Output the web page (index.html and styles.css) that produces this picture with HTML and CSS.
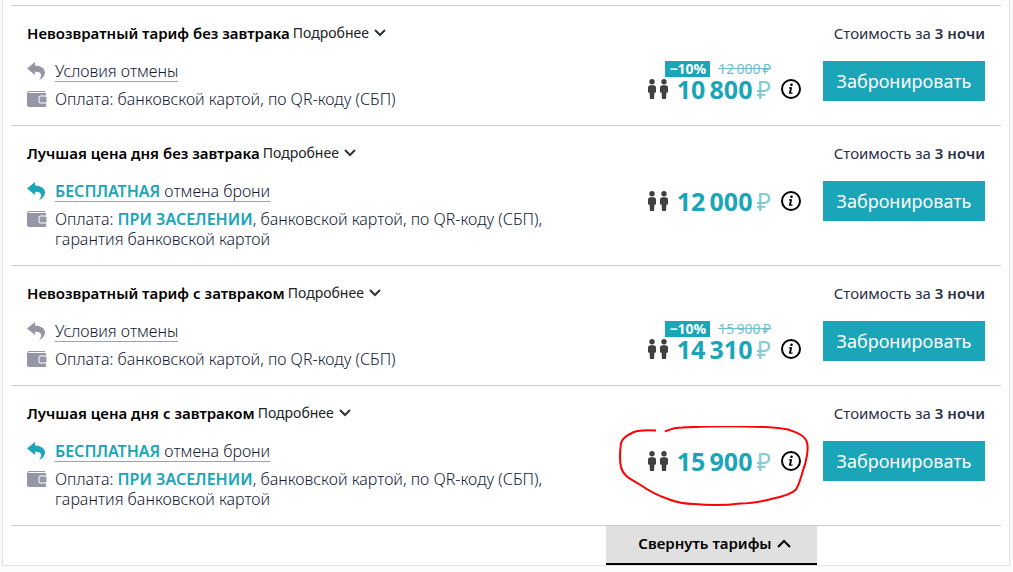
FILE: index.html
```
<!DOCTYPE html>
<html lang="ru">
<head>
    <meta charset="UTF-8">
    <meta name="viewport" content="width=device-width, initial-scale=1.0">
    <title>Тарифы</title>
    <link rel="stylesheet" href="styles.css">
</head>
<body>
    <!-- Shared icons -->
    <svg class="sprite" aria-hidden="true">
        <symbol id="icon-back" viewBox="0 0 20 18">
            <path d="M8 0 0 6.500l8 6.500V9.800c5-.3 8.500 2 4.200 8.200C21 14 20 4 8 3.600z"/>
        </symbol>
        <symbol id="icon-wallet" viewBox="0 0 20 18">
            <path d="M2 1h16v1H1.500v1H19v2.500h-5.500a2 2 0 0 0-2 2v4a2 2 0 0 0 2 2H19V17H2a2 2 0 0 1-2-2V3a2 2 0 0 1 2-2z"/>
            <rect x="12.500" y="6.500" width="7" height="6" rx="1"/>
        </symbol>
        <symbol id="icon-people" viewBox="0 0 20 20">
            <circle cx="4" cy="2.700" r="2.700"/>
            <path d="M2.500 6.200h3A2.500 2.500 0 0 1 8 8.700V13.500H6.500l-.5 6.500H2l-.5-6.500H0V8.700A2.500 2.500 0 0 1 2.500 6.200z"/>
            <circle cx="16" cy="2.700" r="2.700"/>
            <path d="M14.500 6.200h3A2.500 2.500 0 0 1 20 8.700v4.800h-1.500L18 20h-4l-.5-6.500H12V8.700a2.500 2.500 0 0 1 2.500-2.500z"/>
        </symbol>
        <symbol id="icon-info" viewBox="0 0 20 20">
            <circle cx="10" cy="10" r="9" fill="none" stroke="#000" stroke-width="2"/>
            <circle cx="10.500" cy="5.800" r="1.300"/>
            <path d="M8 8.200h3.200l-1.200 5.300h1.500v1.300H7.800L9 9.500H8z"/>
        </symbol>
        <symbol id="icon-down" viewBox="0 0 12 8">
            <path d="M1 1l5 5 5-5" fill="none" stroke="currentColor" stroke-width="2"/>
        </symbol>
        <symbol id="icon-up" viewBox="0 0 14 9">
            <path d="M1 8l6-6 6 6" fill="none" stroke="currentColor" stroke-width="2"/>
        </symbol>
    </svg>

    <div class="card">
        <div class="rates">
            <section class="rate">
                <div class="rate-header">
                    <h3>Невозвратный тариф без завтрака</h3>
                    <button class="more">Подробнее <svg><use href="#icon-down"/></svg></button>
                    <span class="nights">Стоимость за <b>3 ночи</b></span>
                </div>
                <div class="rate-body">
                    <ul class="terms">
                        <li><svg class="back"><use href="#icon-back"/></svg><a href="#">Условия отмены</a></li>
                        <li><svg class="wallet"><use href="#icon-wallet"/></svg><span>Оплата: банковской картой, по QR-коду (СБП)</span></li>
                    </ul>
                    <div class="price">
                        <div class="discount"><span class="badge">−10%</span><s>12&#8201;000&#8201;₽</s></div>
                        <div class="total">
                            <svg class="people"><use href="#icon-people"/></svg>
                            <strong>10&#8201;800<span>₽</span></strong>
                            <button class="info" aria-label="Информация о цене"><svg><use href="#icon-info"/></svg></button>
                        </div>
                    </div>
                    <button class="book">Забронировать</button>
                </div>
            </section>

            <section class="rate">
                <div class="rate-header">
                    <h3>Лучшая цена дня без завтрака</h3>
                    <button class="more">Подробнее <svg><use href="#icon-down"/></svg></button>
                    <span class="nights">Стоимость за <b>3 ночи</b></span>
                </div>
                <div class="rate-body">
                    <ul class="terms">
                        <li><svg class="back free"><use href="#icon-back"/></svg><a href="#"><b>БЕСПЛАТНАЯ</b> отмена брони</a></li>
                        <li><svg class="wallet"><use href="#icon-wallet"/></svg><span>Оплата: <b>ПРИ ЗАСЕЛЕНИИ</b>, банковской картой, по QR-коду (СБП),<br>гарантия банковской картой</span></li>
                    </ul>
                    <div class="price">
                        <div class="total">
                            <svg class="people"><use href="#icon-people"/></svg>
                            <strong>12&#8201;000<span>₽</span></strong>
                            <button class="info" aria-label="Информация о цене"><svg><use href="#icon-info"/></svg></button>
                        </div>
                    </div>
                    <button class="book">Забронировать</button>
                </div>
            </section>

            <section class="rate">
                <div class="rate-header">
                    <h3>Невозвратный тариф с затвраком</h3>
                    <button class="more">Подробнее <svg><use href="#icon-down"/></svg></button>
                    <span class="nights">Стоимость за <b>3 ночи</b></span>
                </div>
                <div class="rate-body">
                    <ul class="terms">
                        <li><svg class="back"><use href="#icon-back"/></svg><a href="#">Условия отмены</a></li>
                        <li><svg class="wallet"><use href="#icon-wallet"/></svg><span>Оплата: банковской картой, по QR-коду (СБП)</span></li>
                    </ul>
                    <div class="price">
                        <div class="discount"><span class="badge">−10%</span><s>15&#8201;900&#8201;₽</s></div>
                        <div class="total">
                            <svg class="people"><use href="#icon-people"/></svg>
                            <strong>14&#8201;310<span>₽</span></strong>
                            <button class="info" aria-label="Информация о цене"><svg><use href="#icon-info"/></svg></button>
                        </div>
                    </div>
                    <button class="book">Забронировать</button>
                </div>
            </section>

            <section class="rate">
                <div class="rate-header">
                    <h3>Лучшая цена дня с завтраком</h3>
                    <button class="more">Подробнее <svg><use href="#icon-down"/></svg></button>
                    <span class="nights">Стоимость за <b>3 ночи</b></span>
                </div>
                <div class="rate-body">
                    <ul class="terms">
                        <li><svg class="back free"><use href="#icon-back"/></svg><a href="#"><b>БЕСПЛАТНАЯ</b> отмена брони</a></li>
                        <li><svg class="wallet"><use href="#icon-wallet"/></svg><span>Оплата: <b>ПРИ ЗАСЕЛЕНИИ</b>, банковской картой, по QR-коду (СБП),<br>гарантия банковской картой</span></li>
                    </ul>
                    <div class="price">
                        <div class="total">
                            <svg class="people"><use href="#icon-people"/></svg>
                            <strong>15&#8201;900<span>₽</span></strong>
                            <button class="info" aria-label="Информация о цене"><svg><use href="#icon-info"/></svg></button>
                        </div>
                        <!-- Hand-drawn circle round the price -->
                        <svg class="marker" viewBox="619 426 192 84">
                            <path d="M656 430.500c-8-.5-17-.5-22 1.500-6 3-11 5-13 11-1 8-2 16 0 24 2 9 10 12 18 17 10 7 20 12 29 15 10 4 17 5 26 5 16 1.500 32 1.500 46-.5 14 0 22-2 33-5 10-2 18-4 23-9 5-8 6-18 9-25 2-8 4-14 2-22-2-7-10-10-19-13-16-3-27-3-42-3-24-1-44 0-64 1-8 0-12 2-17 4"/>
                        </svg>
                    </div>
                    <button class="book">Забронировать</button>
                </div>
            </section>
        </div>
        <button class="collapse">Свернуть тарифы <svg><use href="#icon-up"/></svg></button>
    </div>
</body>
</html>
```
FILE: styles.css
```
* {
    box-sizing: border-box;
}
body {
    font-family: "Noto Sans", "Open Sans", sans-serif;
    font-size: 16px;
    font-weight: 300;
    line-height: 20px;
    color: #151a35;
    background: #fcfcfc;
    margin: 0;
}
b {
    font-weight: 600;
}
button {
    font-family: inherit;
    border: 0;
    padding: 0;
    background: none;
    cursor: pointer;
}
svg {
    fill: currentColor;
    flex: none;
}
.sprite {
    display: none;
}
.card {
    margin: 0 3px 0 2px;
    padding: 5px 8px 0;
    background: #fff;
    border: 1px solid #e2e2e2;
    border-top: 0;
    box-shadow: 0 2px 4px rgba(0, 0, 0, 0.05);
}
.rates {
    border-top: 1px solid #ccc;
}
.rate {
    padding: 17px 16px 16px;
    border-bottom: 1px solid #ccc;
}
.rate-header {
    display: flex;
    align-items: center;
    margin-bottom: 18px;
}
.rate-header h3 {
    margin: 0 3px 0 0;
    font-size: 15px;
    font-weight: 600;
    color: #000;
}
.more {
    display: flex;
    align-items: center;
    gap: 5px;
    font-size: 14px;
    font-weight: 400;
    line-height: 20px;
    color: #222;
}
.more svg {
    width: 12px;
    height: 8px;
    color: #333;
}
.nights {
    margin-left: auto;
    font-size: 15px;
    font-weight: 400;
    color: #2b3048;
}
.rate-body {
    display: flex;
    align-items: flex-start;
}
.terms {
    flex: 1;
    list-style: none;
    margin: 0;
    padding: 0;
}
.terms li {
    display: flex;
    gap: 8px;
}
.terms li + li {
    margin-top: 7px;
}
.terms svg {
    width: 20px;
    height: 20px;
    padding: 1px 0;
    color: #9496a5;
}
.terms svg.free {
    color: #1ba5b8;
}
.terms a {
    color: inherit;
    text-decoration: none;
    border-bottom: 1px solid #a0a0ae;
    line-height: 20px;
}
.terms b {
    color: #1ba5b8;
}
.price {
    position: relative;
    display: flex;
    flex-direction: column;
    justify-content: center;
    height: 40px;
    margin-right: 22px;
}
.discount {
    display: flex;
    justify-content: flex-end;
    gap: 8px;
    margin-right: 30px;
    font-size: 14px;
    line-height: 16px;
}
.discount s {
    font-weight: 400;
    color: #6dbfcb;
}
.badge {
    padding: 0 4px;
    font-weight: bold;
    color: #fff;
    background: #1ba5b8;
}
.total {
    display: flex;
    align-items: center;
    justify-content: flex-end;
    height: 24px;
}
.people {
    width: 20px;
    height: 20px;
    margin-right: 9px;
    color: #404040;
}
.total strong {
    font-size: 25px;
    font-weight: 700;
    line-height: 24px;
    color: #1ba5b8;
}
.total span {
    margin-left: 4px;
    font-weight: 400;
    color: #82ccd6;
}
.info {
    height: 20px;
    margin-left: 10px;
}
.info svg {
    display: block;
    width: 20px;
    height: 20px;
}
.book {
    width: 162px;
    height: 40px;
    font-size: 18px;
    font-weight: 400;
    color: #fff;
    background: #1ba5b8;
}
.marker {
    position: absolute;
    top: -15px;
    right: -10px;
    width: 192px;
    height: 84px;
    fill: none;
    stroke: #f00;
    stroke-width: 2;
    pointer-events: none;
}
.collapse {
    display: flex;
    align-items: center;
    justify-content: center;
    gap: 5px;
    width: 211px;
    height: 39px;
    padding: 0 0 3px 6px;
    margin: 0 184px 0 auto;
    font-size: 15px;
    font-weight: 600;
    background: #e0e0e0;
    border-bottom: 2px solid #000;
}
.collapse svg {
    width: 14px;
    height: 9px;
}
```
